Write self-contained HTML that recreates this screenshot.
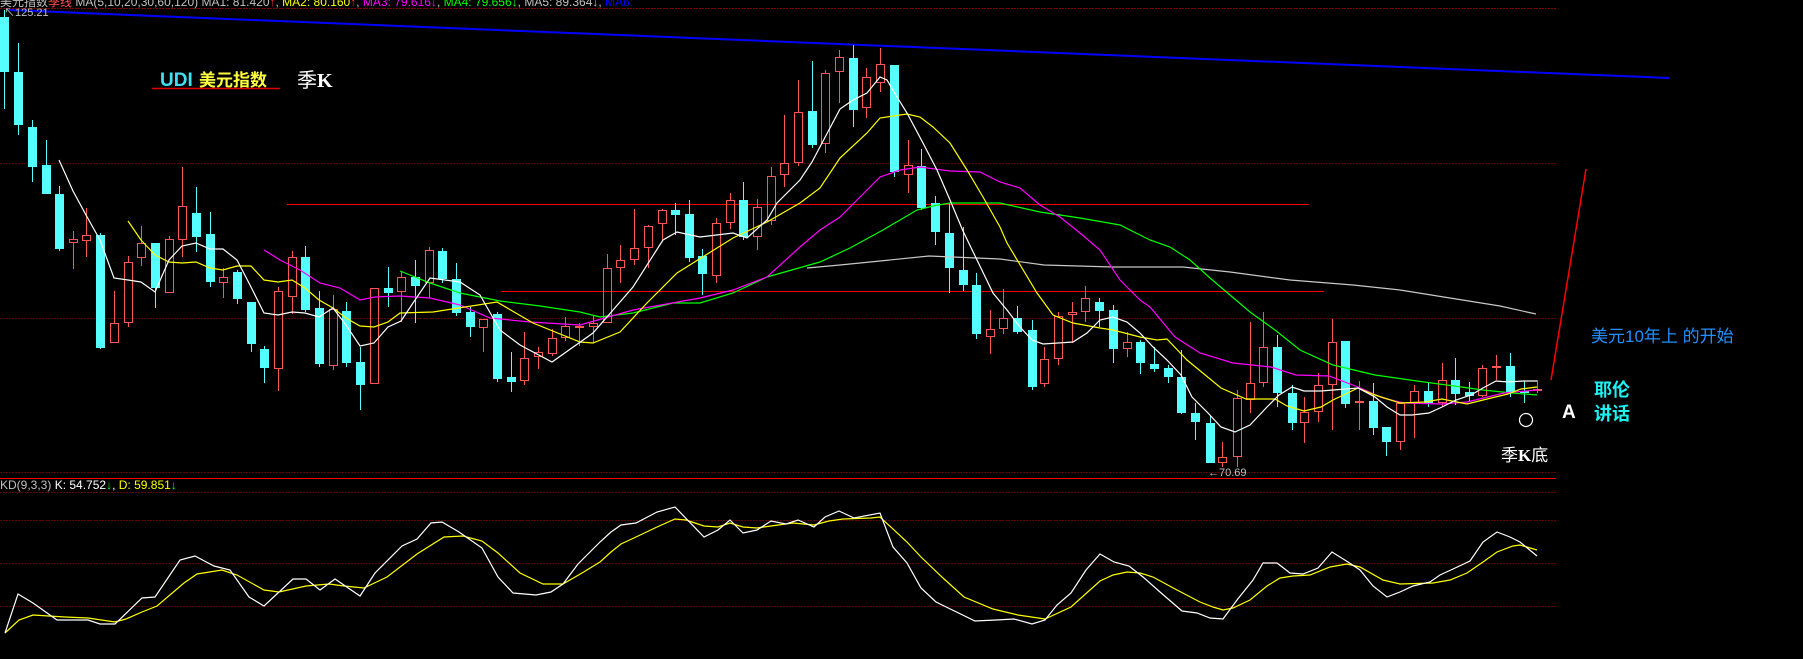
<!DOCTYPE html>
<html><head><meta charset="utf-8"><style>
html,body{margin:0;padding:0;background:#000;width:1803px;height:659px;overflow:hidden}
svg{display:block}
text{font-family:"Liberation Sans","Noto Sans CJK SC",sans-serif}
</style></head><body>
<svg id="s" width="1803" height="659" xmlns="http://www.w3.org/2000/svg">
<rect width="1803" height="659" fill="#000"/>
<g id="grid" stroke-width="1" fill="none">
<line x1="0" y1="8.5" x2="1556" y2="8.5" stroke="#800000" stroke-dasharray="2,1"/>
<line x1="0" y1="163.5" x2="1556" y2="163.5" stroke="#600000" stroke-dasharray="2,1"/>
<line x1="0" y1="318.5" x2="1556" y2="318.5" stroke="#600000" stroke-dasharray="2,1"/>
<line x1="0" y1="472.5" x2="1556" y2="472.5" stroke="#600000" stroke-dasharray="2,1"/>
<line x1="0" y1="478.5" x2="1556" y2="478.5" stroke="#ff0000"/>
<line x1="0" y1="492.5" x2="1556" y2="492.5" stroke="#600000" stroke-dasharray="2,1"/>
<line x1="0" y1="520.5" x2="1556" y2="520.5" stroke="#600000" stroke-dasharray="2,1"/>
<line x1="0" y1="563.5" x2="1556" y2="563.5" stroke="#600000" stroke-dasharray="2,1"/>
<line x1="0" y1="606.5" x2="1556" y2="606.5" stroke="#600000" stroke-dasharray="2,1"/>
<line x1="287" y1="204.5" x2="1309" y2="204.5" stroke="#ff0000"/>
<line x1="501" y1="291.5" x2="1324" y2="291.5" stroke="#ff0000"/>
<line x1="9" y1="10" x2="1669" y2="78" stroke="#0000ff" stroke-width="2"/>
<line x1="1551" y1="380" x2="1586" y2="169" stroke="#ff0000" stroke-width="1.5"/>
</g>
<g id="candles"></g>
<g id="mas" fill="none" stroke-width="1.2"></g>
<g id="kd" fill="none" stroke-width="1.2"></g>

<text x="0" y="6" font-size="12" fill="#c0c0c0">美元指数<tspan fill="#ff5050">季线</tspan> MA(5,10,20,30,60,120) MA1: 81.420<tspan fill="#ff3030">↑</tspan>, <tspan fill="#ffff00">MA2: 80.160</tspan><tspan fill="#ff3030">↑</tspan>, <tspan fill="#ff00ff">MA3: 79.616↓</tspan>, <tspan fill="#00ff00">MA4: 79.656↓</tspan>, MA5: 89.364↓, <tspan fill="#0000ff">MA6:</tspan></text>
<text x="4" y="16" font-size="11" fill="#c0c0c0">↖125.21</text>

<text x="160" y="86" font-size="19" font-weight="bold" fill="#40e0f0" font-family="Liberation Serif, serif">UDI</text>
<text x="199" y="86" font-size="17" font-weight="bold" fill="#ffff40" font-family="Noto Sans CJK SC, sans-serif">美元指数</text>
<line x1="152" y1="88.5" x2="280" y2="88.5" stroke="#e00000" stroke-width="1.5"/>
<text x="297" y="87" font-size="20" fill="#ffffff" font-family="Noto Serif CJK SC, serif">季<tspan font-family="Liberation Serif, serif" font-weight="bold">K</tspan></text>

<text x="0" y="489" font-size="12" fill="#c0c0c0">KD(9,3,3)  <tspan fill="#ffffff">K: 54.752</tspan><tspan fill="#00ff00">↓</tspan><tspan fill="#ffffff">,</tspan> <tspan fill="#ffff00">D: 59.851</tspan><tspan fill="#00ff00">↓</tspan></text>

<text x="1208" y="476" font-size="11" fill="#c0c0c0">←70.69</text>
<text x="1591" y="342" font-size="17" fill="#2090ff" font-family="Noto Sans CJK SC, sans-serif">美元10年上 的开始</text>
<text x="1594" y="396" font-size="18" font-weight="bold" fill="#20f0f0" font-family="Noto Sans CJK SC, sans-serif">耶伦</text>
<text x="1594" y="420" font-size="18" font-weight="bold" fill="#20f0f0" font-family="Noto Sans CJK SC, sans-serif">讲话</text>
<text x="1562" y="418" font-size="19" font-weight="bold" fill="#ffffff" font-family="Liberation Serif, serif">A</text>
<circle cx="1526" cy="420" r="6.5" fill="none" stroke="#ffffff" stroke-width="1.2"/>
<text x="1501" y="461" font-size="17" fill="#ffffff" font-family="Noto Serif CJK SC, serif">季<tspan font-family="Liberation Serif, serif" font-weight="bold">K</tspan>底</text>
</svg>
<script>
var C=[[4,17,72,10,109,'c'],[18,72,125,43,135,'c'],[32,127,167,120,182,'c'],[46,165,194,140,194,'c'],[59,194,249,186,251,'c'],[73,239,243,231,269,'r'],[86,235,241,208,257,'r'],[100,235,348,233,349,'c'],[114,323,343,291,343,'r'],[128,262,323,256,327,'r'],[141,243,258,226,266,'r'],[155,243,288,243,308,'c'],[169,239,293,236,293,'r'],[182,206,240,167,257,'r'],[196,213,237,187,252,'c'],[210,234,282,212,287,'c'],[223,277,283,268,298,'r'],[237,272,299,270,304,'c'],[251,302,344,302,352,'c'],[264,349,368,346,383,'c'],[278,291,369,287,391,'r'],[292,257,297,251,314,'r'],[305,257,310,246,312,'c'],[319,308,364,291,367,'c'],[333,309,366,295,370,'r'],[346,311,363,302,367,'c'],[360,362,385,347,410,'c'],[374,288,384,288,384,'r'],[388,288,293,267,307,'c'],[401,277,292,271,322,'r'],[415,277,286,260,323,'c'],
[429,250,283,247,298,'r'],[442,251,279,248,283,'c'],[456,279,313,263,316,'c'],[470,312,327,307,337,'c'],[483,319,328,319,352,'r'],[497,314,379,312,382,'c'],[511,377,382,352,392,'c'],[524,358,381,332,385,'r'],[538,352,357,347,369,'r'],[552,338,354,329,356,'r'],[565,326,338,317,341,'r'],[579,326,327,323,346,'r'],[593,323,327,316,343,'r'],[607,268,323,254,323,'r'],[620,260,268,245,283,'r'],[634,248,260,209,265,'r'],[648,226,248,225,268,'r'],[662,210,224,209,240,'r'],[675,210,215,203,235,'c'],[689,214,258,200,262,'c'],[702,256,274,249,295,'c'],[716,223,276,218,283,'r'],[730,200,223,193,229,'r'],[743,200,237,182,240,'c'],[757,207,237,199,250,'r'],
[771,176,221,167,225,'r'],[784,163,175,115,187,'r'],[798,112,163,80,166,'r'],[812,111,145,61,148,'c'],[825,73,144,70,153,'r'],[839,57,72,50,103,'r'],[853,58,110,45,127,'c'],[866,77,108,68,118,'r'],[880,64,83,48,92,'r'],[894,65,172,65,177,'c'],[908,165,175,140,193,'r'],[921,166,208,149,210,'c'],
[935,203,232,196,245,'c'],[949,233,268,203,293,'c'],[963,270,285,227,291,'c'],[976,285,334,273,339,'c'],[990,329,337,310,354,'r'],[1003,318,329,289,334,'r'],[1017,318,332,306,334,'c'],[1032,330,387,320,390,'c'],[1044,359,384,347,387,'r'],[1058,316,359,312,365,'r'],[1072,312,315,302,343,'r'],[1085,298,312,286,322,'r'],[1099,302,311,298,327,'c'],[1113,310,349,305,363,'c'],[1127,342,349,332,357,'r'],[1140,342,363,340,374,'c'],[1154,364,369,347,372,'c'],[1168,368,377,365,383,'c'],[1181,377,413,350,414,'c'],
[1195,413,422,403,440,'c'],[1210,423,463,416,463,'c'],[1222,457,463,442,467,'r'],[1237,398,457,390,467,'r'],[1250,383,400,322,413,'r'],[1263,347,383,312,387,'r'],[1277,347,393,335,407,'c'],[1292,393,423,385,430,'c'],[1304,412,423,397,443,'r'],[1318,385,412,373,422,'r'],[1332,342,385,319,430,'r'],[1345,341,404,341,408,'c'],[1359,401,403,381,430,'r'],[1373,401,428,383,435,'c'],[1386,427,442,427,456,'c'],[1400,403,442,403,450,'r'],[1414,391,403,385,438,'r'],[1428,391,403,383,407,'c'],[1442,380,403,363,407,'r'],[1455,380,394,358,405,'c'],[1469,392,396,382,402,'c'],[1482,368,396,365,397,'r'],[1496,366,368,355,380,'r'],[1510,366,392,353,397,'c'],[1524,391,392,381,403,'c'],[1537,389,391,380,393,'r']];
var h="";
C.forEach(function(c){var x=c[0],t=c[1],b=c[2],hi=c[3],lo=c[4];
if(b-t<2)b=t+2;
if(c[5]=='c'){h+='<line x1="'+(x+.5)+'" y1="'+hi+'" x2="'+(x+.5)+'" y2="'+lo+'" stroke="#55ffff"/>';
h+='<rect x="'+(x-4)+'" y="'+t+'" width="9" height="'+(b-t)+'" fill="#55ffff"/>';}
else{h+='<line x1="'+(x+.5)+'" y1="'+hi+'" x2="'+(x+.5)+'" y2="'+t+'" stroke="#ff5555"/><line x1="'+(x+.5)+'" y1="'+b+'" x2="'+(x+.5)+'" y2="'+lo+'" stroke="#ff5555"/>';
h+='<rect x="'+(x-3.5)+'" y="'+(t+.5)+'" width="8" height="'+(b-t-1)+'" fill="none" stroke="#ff5555"/>';}});
document.getElementById('candles').innerHTML=h;
function pl(pts,col){return '<polyline points="'+pts.map(function(p){return p.join(',')}).join(' ')+'" stroke="'+col+'"/>';}
var W=[[59,160],[73,191],[86,215],[100,240],[114,278],[128,280],[141,282],[155,292],[169,260],[182,246],[196,243],[210,249],[223,249],[237,260],[251,287],[264,313],[278,315],[292,312],[305,313],[319,317],[333,308],[346,325],[360,346],[374,343],[388,327],[401,321],[415,300],[430,278],[460,282],[480,295],[500,330],[520,345],[552,362],[593,333],[633,287],[663,240],[677,232],[700,237],[733,233],[747,238],[767,220],[777,203],[800,180],[812,162],[840,109],[853,100],[867,93],[880,77],[887,80],[897,97],[907,113],[923,143],[937,170],[950,200],[963,231],[977,260],[993,293],[1007,310],[1020,327],[1032,340],[1043,344],[1073,342],[1087,333],[1100,320],[1113,317],[1127,322],[1140,333],[1153,347],[1167,360],[1181,375],[1192,397],[1208,413],[1221,427],[1235,432],[1250,425],[1267,407],[1279,395],[1292,387],[1304,391],[1321,391],[1333,390],[1346,389],[1358,388],[1375,397],[1387,407],[1400,415],[1412,415],[1429,413],[1442,407],[1456,400],[1471,395],[1483,388],[1496,381],[1508,382],[1523,381],[1537,381]];
var Y=[[128,221],[141,240],[155,255],[169,262],[182,263],[196,262],[210,268],[223,270],[237,266],[251,266],[264,280],[278,282],[292,280],[305,288],[319,300],[333,308],[346,318],[360,326],[374,327],[388,322],[400,313],[433,312],[497,302],[533,323],[580,342],[593,343],[620,332],[647,303],[677,273],[733,238],[767,222],[800,203],[820,188],[840,158],[867,133],[880,118],[893,116],[907,114],[920,117],[933,127],[950,143],[967,170],[983,197],[1000,227],[1007,243],[1037,293],[1053,315],[1073,323],[1100,328],[1113,330],[1140,337],[1157,340],[1167,339],[1187,360],[1221,388],[1246,399],[1275,399],[1287,406],[1304,411],[1321,407],[1333,400],[1358,388],[1375,395],[1400,403],[1425,402],[1442,399],[1467,404],[1483,400],[1508,394],[1521,389],[1537,387]];
var M=[[264,250],[280,260],[300,270],[320,283],[340,288],[360,300],[375,297],[400,296],[430,298],[460,305],[490,318],[530,322],[580,325],[633,310],[700,298],[733,290],[767,277],[800,247],[820,230],[840,217],[860,197],[880,177],[900,170],[920,167],[950,171],[980,172],[1000,182],[1020,188],[1040,205],[1060,217],[1080,233],[1100,250],[1120,280],[1140,300],[1150,307],[1175,337],[1200,353],[1233,363],[1271,367],[1296,375],[1329,376],[1358,387],[1383,398],[1404,403],[1442,404],[1467,402],[1504,393],[1537,390]];
var G=[[400,271],[430,283],[460,293],[500,301],[540,306],[580,312],[600,317],[633,313],[673,303],[700,303],[733,293],[767,277],[820,262],[850,248],[883,230],[900,220],[917,210],[933,206],[950,203],[1000,203],[1040,212],[1080,218],[1120,225],[1150,240],[1170,247],[1190,260],[1210,278],[1230,295],[1250,312],[1275,330],[1300,350],[1333,365],[1375,375],[1417,381],[1454,386],[1483,390],[1512,393],[1537,395]];
var R=[[807,268],[840,265],[880,261],[929,256],[1000,259],[1044,265],[1113,267],[1183,267],[1230,272],[1290,280],[1353,285],[1400,290],[1450,298],[1500,306],[1536,314]];
document.getElementById('mas').innerHTML=pl(R,'#c8c8c8')+pl(G,'#00ff00')+pl(M,'#ff00ff')+pl(Y,'#ffff00')+pl(W,'#ffffff');
var KW=[[5,633],[18,594],[33,603],[57,620],[88,620],[100,624],[115,624],[142,598],[155,597],[180,560],[195,556],[214,566],[230,570],[249,597],[264,606],[293,579],[306,579],[320,590],[335,579],[360,596],[375,573],[402,546],[417,539],[431,523],[442,522],[459,532],[482,548],[498,577],[513,593],[536,595],[551,592],[563,584],[578,564],[600,542],[611,532],[621,525],[636,523],[657,512],[675,507],[704,537],[718,530],[730,520],[743,533],[757,530],[771,521],[786,524],[798,520],[814,527],[825,517],[839,511],[854,518],[880,513],[893,547],[907,563],[921,588],[936,602],[975,621],[996,620],[1014,619],[1032,624],[1045,620],[1057,605],[1071,593],[1086,570],[1100,554],[1114,562],[1129,566],[1143,577],[1160,592],[1182,611],[1197,613],[1210,618],[1223,619],[1237,600],[1253,580],[1263,563],[1277,563],[1290,573],[1303,574],[1318,568],[1332,552],[1348,562],[1360,570],[1373,586],[1387,597],[1400,592],[1413,586],[1430,582],[1440,575],[1453,569],[1470,561],[1483,542],[1497,532],[1510,537],[1520,542],[1537,556]];
var KY=[[5,633],[19,620],[33,615],[65,617],[88,618],[115,622],[126,619],[142,612],[157,606],[184,583],[197,574],[222,570],[237,575],[264,590],[279,592],[306,586],[329,584],[344,586],[364,588],[387,577],[417,554],[444,537],[463,536],[482,541],[498,553],[520,573],[543,584],[563,584],[582,573],[600,562],[611,552],[621,544],[636,537],[657,527],[675,519],[686,520],[704,526],[718,527],[730,523],[743,527],[757,528],[771,526],[793,523],[814,525],[829,521],[843,519],[871,518],[880,517],[907,542],[921,557],[943,578],[964,597],[993,609],[1018,615],[1045,619],[1071,607],[1100,581],[1113,575],[1127,572],[1140,573],[1153,577],[1177,590],[1200,602],[1213,607],[1223,610],[1233,608],[1250,600],[1267,586],[1280,578],[1293,576],[1310,575],[1330,567],[1347,564],[1360,567],[1383,580],[1400,584],[1433,583],[1450,580],[1467,573],[1483,562],[1497,552],[1513,546],[1520,545],[1537,550]];
document.getElementById('kd').innerHTML=pl(KY,'#ffff00')+pl(KW,'#ffffff');
</script>
</body></html>
